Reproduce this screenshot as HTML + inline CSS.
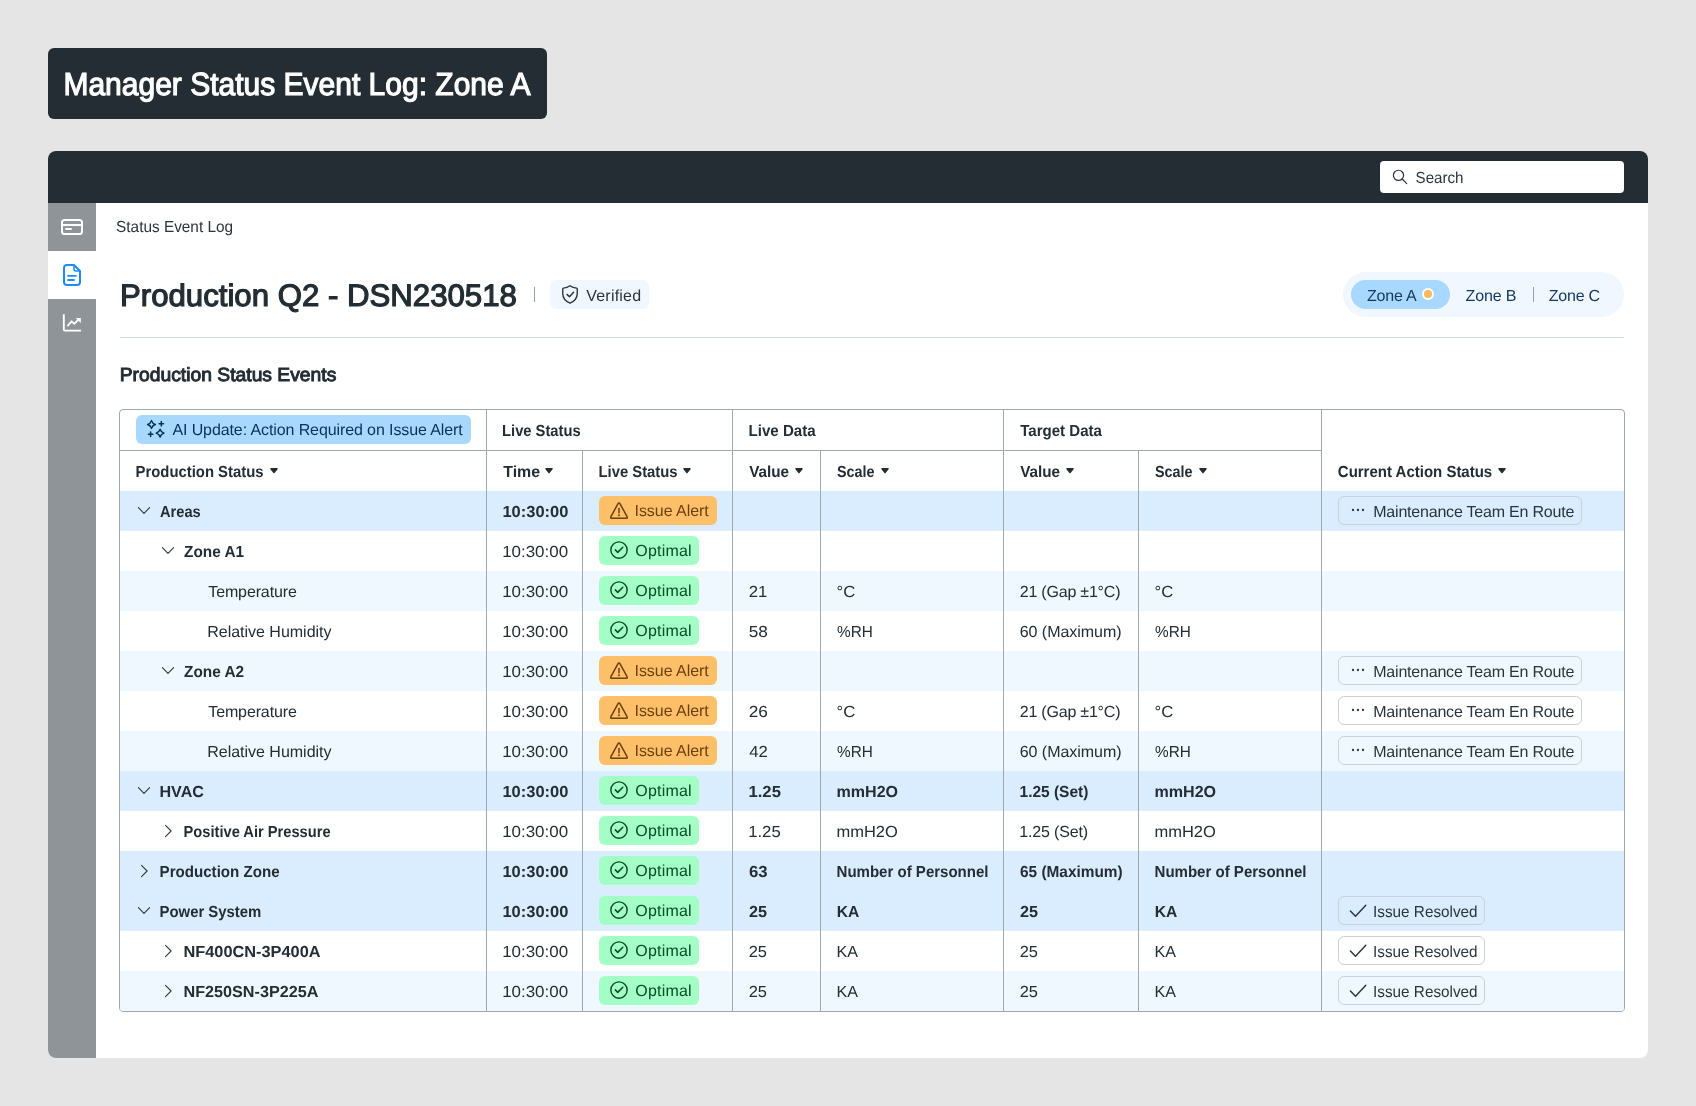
<!DOCTYPE html>
<html><head><meta charset="utf-8"><title>Manager Status Event Log: Zone A</title>
<style>
html,body{margin:0;padding:0}
body{width:1696px;height:1106px;background:#e5e5e5;position:relative;overflow:hidden;font-family:"Liberation Sans", sans-serif;color:#232d33}
.a{position:absolute}
.t{position:absolute;white-space:pre;line-height:1}
</style></head><body>
<div class="a" style="left:48px;top:48px;width:499px;height:71px;border-radius:6px;background:#232d33"></div>
<div class="a" style="left:48px;top:151px;width:1600px;height:907px;border-radius:8px;background:#fff;overflow:hidden">
<div class="a" style="left:0;top:0;width:1600px;height:52px;background:#232d33"></div>
<div class="a" style="left:0;top:52px;width:48px;height:855px;background:#8e9497"></div>
<div class="a" style="left:0;top:100px;width:48px;height:48px;background:#fff"></div>
</div>
<div class="a" style="left:1380px;top:161px;width:244px;height:32px;border-radius:4px;background:#fff"></div>
<svg style="position:absolute;left:1390px;top:167px;overflow:visible" width="20" height="20" viewBox="0 0 20 20" ><circle cx="8.5" cy="8.35" r="5.1" fill="none" stroke="#2a353b" stroke-width="1.2"/><path d="M12.2 12.05L16.7 16.6" stroke="#2a353b" stroke-width="1.25" stroke-linecap="round"/></svg>
<svg style="position:absolute;left:61px;top:219px;overflow:visible" width="22" height="16" viewBox="0 0 22 16" ><rect x="1" y="1" width="20" height="14" rx="2.6" fill="none" stroke="#fff" stroke-width="2"/><path d="M1 6H21" stroke="#fff" stroke-width="2.1"/><path d="M5 10H10" stroke="#fff" stroke-width="1.9" stroke-linecap="round"/></svg>
<svg style="position:absolute;left:63px;top:264px;overflow:visible" width="18" height="22" viewBox="0 0 18 22" ><path d="M11 1H4a3 3 0 0 0-3 3v14a3 3 0 0 0 3 3h10a3 3 0 0 0 3-3V7z" fill="none" stroke="#1a8cff" stroke-width="2" stroke-linejoin="round"/><path d="M11 1.5V5a2 2 0 0 0 2 2h3.5" fill="none" stroke="#1a8cff" stroke-width="1.6"/><path d="M5 11.8H13M5 16H11" stroke="#1a8cff" stroke-width="1.8" stroke-linecap="round"/></svg>
<svg style="position:absolute;left:63px;top:314px;overflow:visible" width="18" height="18" viewBox="0 0 18 18" ><path d="M0.8 0.2V15.6Q0.8 16.6 1.8 16.6H18" fill="none" stroke="#fff" stroke-width="1.9"/><path d="M4.4 12.2L8.6 7.3L11.3 9.8L15.8 5.2" fill="none" stroke="#fff" stroke-width="1.8" stroke-linejoin="round"/><path d="M12.6 3.9H17.8V9.1z" fill="#fff"/></svg>
<div class="a" style="left:534px;top:287px;width:1px;height:15px;background:#9aa1a6"></div>
<div class="a" style="left:550px;top:280px;width:99px;height:29px;border-radius:6px;background:#f0f7fe"></div>
<svg style="position:absolute;left:562px;top:285px;overflow:visible" width="16" height="19" viewBox="0 0 16 19" ><path d="M8 0.8C6 2.2 3.6 2.9 1.4 3.1Q0.75 3.15 0.75 3.8V8.6C0.75 13.2 3.6 16.4 8 18.2C12.4 16.4 15.25 13.2 15.25 8.6V3.8Q15.25 3.15 14.6 3.1C12.4 2.9 10 2.2 8 0.8Z" fill="none" stroke="#2a353b" stroke-width="1.4" stroke-linejoin="round"/><path d="M5 9.4L7.5 11.7L11.6 7.3" fill="none" stroke="#2a353b" stroke-width="1.45" stroke-linecap="round" stroke-linejoin="round"/></svg>
<div class="a" style="left:1343px;top:272px;width:281px;height:45px;border-radius:23px;background:#f0f7fe"></div>
<div class="a" style="left:1351px;top:280px;width:99px;height:29px;border-radius:15px;background:#a9d8ff"></div>
<div class="a" style="left:1422px;top:288px;width:12px;height:12px;border-radius:6px;background:#fff"></div>
<div class="a" style="left:1424px;top:290px;width:8px;height:8px;border-radius:4px;background:#fdb85a"></div>
<div class="a" style="left:1533px;top:287px;width:1px;height:15px;background:#9aa1a6"></div>
<div class="a" style="left:120px;top:337px;width:1504px;height:1px;background:#cfd6db"></div>
<div class="a" style="left:119px;top:409px;width:1504px;height:601px;border:1px solid #a1a8ad;border-radius:4px;background:#fff;overflow:hidden">
<div class="a" style="left:0;top:81px;width:1504px;height:40px;background:#d9edfe"></div>
<div class="a" style="left:0;top:121px;width:1504px;height:40px;background:#ffffff"></div>
<div class="a" style="left:0;top:161px;width:1504px;height:40px;background:#f0f8ff"></div>
<div class="a" style="left:0;top:201px;width:1504px;height:40px;background:#ffffff"></div>
<div class="a" style="left:0;top:241px;width:1504px;height:40px;background:#f0f8ff"></div>
<div class="a" style="left:0;top:281px;width:1504px;height:40px;background:#ffffff"></div>
<div class="a" style="left:0;top:321px;width:1504px;height:40px;background:#f0f8ff"></div>
<div class="a" style="left:0;top:361px;width:1504px;height:40px;background:#d9edfe"></div>
<div class="a" style="left:0;top:401px;width:1504px;height:40px;background:#ffffff"></div>
<div class="a" style="left:0;top:441px;width:1504px;height:40px;background:#d9edfe"></div>
<div class="a" style="left:0;top:481px;width:1504px;height:40px;background:#d9edfe"></div>
<div class="a" style="left:0;top:521px;width:1504px;height:40px;background:#ffffff"></div>
<div class="a" style="left:0;top:561px;width:1504px;height:40px;background:#f0f8ff"></div>
<div class="a" style="left:0;top:40px;width:1202px;height:1px;background:#a1a8ad"></div>
<div class="a" style="left:366px;top:0px;width:1px;height:601px;background:#a1a8ad"></div>
<div class="a" style="left:462px;top:41px;width:1px;height:560px;background:#a1a8ad"></div>
<div class="a" style="left:612px;top:0px;width:1px;height:601px;background:#a1a8ad"></div>
<div class="a" style="left:700px;top:41px;width:1px;height:560px;background:#a1a8ad"></div>
<div class="a" style="left:883px;top:0px;width:1px;height:601px;background:#a1a8ad"></div>
<div class="a" style="left:1018px;top:41px;width:1px;height:560px;background:#a1a8ad"></div>
<div class="a" style="left:1201px;top:0px;width:1px;height:601px;background:#a1a8ad"></div>
</div>
<div class="a" style="left:136px;top:415px;width:335px;height:29px;border-radius:6px;background:#a9d8ff"></div>
<svg style="position:absolute;left:140px;top:415px;overflow:visible" width="30" height="29" viewBox="0 0 30 29" ><path d="M11.5 5.6Q12.4009 8.5991 15.4 9.5Q12.4009 10.4009 11.5 13.4Q10.5991 10.4009 7.6 9.5Q10.5991 8.5991 11.5 5.6z" fill="none" stroke="#06315c" stroke-width="1.45" stroke-linejoin="round"/><path d="M19.1 8.7H23.5M21.3 6.499999999999999V10.899999999999999" stroke="#06315c" stroke-width="1.5" stroke-linecap="round" fill="none"/><path d="M8.399999999999999 19.3H12.8M10.6 17.1V21.5" stroke="#06315c" stroke-width="1.5" stroke-linecap="round" fill="none"/><path d="M20.1 14.200000000000001Q21.0009 17.1991 24.0 18.1Q21.0009 19.0009 20.1 22.0Q19.1991 19.0009 16.200000000000003 18.1Q19.1991 17.1991 20.1 14.200000000000001z" fill="none" stroke="#06315c" stroke-width="1.45" stroke-linejoin="round"/></svg>
<svg style="position:absolute;left:270px;top:468px;overflow:visible" width="8" height="5.4" viewBox="0 0 8 5.4" ><path d="M0.9 0h6.2a0.7 0.7 0 0 1 0.53 1.16L4.55 5a0.72 0.72 0 0 1-1.1 0L0.37 1.16A0.7 0.7 0 0 1 0.9 0z" fill="#232d33"/></svg>
<svg style="position:absolute;left:544.5px;top:468px;overflow:visible" width="8" height="5.4" viewBox="0 0 8 5.4" ><path d="M0.9 0h6.2a0.7 0.7 0 0 1 0.53 1.16L4.55 5a0.72 0.72 0 0 1-1.1 0L0.37 1.16A0.7 0.7 0 0 1 0.9 0z" fill="#232d33"/></svg>
<svg style="position:absolute;left:683px;top:468px;overflow:visible" width="8" height="5.4" viewBox="0 0 8 5.4" ><path d="M0.9 0h6.2a0.7 0.7 0 0 1 0.53 1.16L4.55 5a0.72 0.72 0 0 1-1.1 0L0.37 1.16A0.7 0.7 0 0 1 0.9 0z" fill="#232d33"/></svg>
<svg style="position:absolute;left:795px;top:468px;overflow:visible" width="8" height="5.4" viewBox="0 0 8 5.4" ><path d="M0.9 0h6.2a0.7 0.7 0 0 1 0.53 1.16L4.55 5a0.72 0.72 0 0 1-1.1 0L0.37 1.16A0.7 0.7 0 0 1 0.9 0z" fill="#232d33"/></svg>
<svg style="position:absolute;left:881px;top:468px;overflow:visible" width="8" height="5.4" viewBox="0 0 8 5.4" ><path d="M0.9 0h6.2a0.7 0.7 0 0 1 0.53 1.16L4.55 5a0.72 0.72 0 0 1-1.1 0L0.37 1.16A0.7 0.7 0 0 1 0.9 0z" fill="#232d33"/></svg>
<svg style="position:absolute;left:1066px;top:468px;overflow:visible" width="8" height="5.4" viewBox="0 0 8 5.4" ><path d="M0.9 0h6.2a0.7 0.7 0 0 1 0.53 1.16L4.55 5a0.72 0.72 0 0 1-1.1 0L0.37 1.16A0.7 0.7 0 0 1 0.9 0z" fill="#232d33"/></svg>
<svg style="position:absolute;left:1199px;top:468px;overflow:visible" width="8" height="5.4" viewBox="0 0 8 5.4" ><path d="M0.9 0h6.2a0.7 0.7 0 0 1 0.53 1.16L4.55 5a0.72 0.72 0 0 1-1.1 0L0.37 1.16A0.7 0.7 0 0 1 0.9 0z" fill="#232d33"/></svg>
<svg style="position:absolute;left:1498px;top:468px;overflow:visible" width="8" height="5.4" viewBox="0 0 8 5.4" ><path d="M0.9 0h6.2a0.7 0.7 0 0 1 0.53 1.16L4.55 5a0.72 0.72 0 0 1-1.1 0L0.37 1.16A0.7 0.7 0 0 1 0.9 0z" fill="#232d33"/></svg>
<svg style="position:absolute;left:136px;top:503px;overflow:visible" width="16" height="16" viewBox="0 0 16 16" ><path d="M2.4 4.7L8 10.4L13.6 4.7" fill="none" stroke="#333e45" stroke-width="1.15" stroke-linecap="round" stroke-linejoin="round"/></svg>
<div class="a" style="left:599px;top:496px;width:118px;height:29px;border-radius:6px;background:#fdbf68"></div>
<svg style="position:absolute;left:609px;top:501.1px;overflow:visible" width="20" height="20" viewBox="0 0 20 20" ><path d="M9.2 2.4a0.93 0.93 0 0 1 1.6 0L18.2 15.85a0.93 0.93 0 0 1-0.8 1.4H2.6a0.93 0.93 0 0 1-0.8-1.4L9.2 2.4z" fill="none" stroke="#6a4210" stroke-width="1.5" stroke-linejoin="round"/><path d="M10 7.6v4.1" stroke="#6a4210" stroke-width="1.5" stroke-linecap="round" fill="none"/><circle cx="10" cy="14.2" r="0.95" fill="#6a4210"/></svg>
<div class="a" style="left:1338px;top:496px;width:242px;height:27px;border-radius:6px;border:1px solid #ccd2d6"></div>
<svg style="position:absolute;left:1350px;top:502px;overflow:visible" width="16" height="16" viewBox="0 0 16 16" ><circle cx="3" cy="8" r="1.15" fill="#2a353b"/><circle cx="8" cy="8" r="1.15" fill="#2a353b"/><circle cx="13" cy="8" r="1.15" fill="#2a353b"/></svg>
<svg style="position:absolute;left:160px;top:543px;overflow:visible" width="16" height="16" viewBox="0 0 16 16" ><path d="M2.4 4.7L8 10.4L13.6 4.7" fill="none" stroke="#333e45" stroke-width="1.15" stroke-linecap="round" stroke-linejoin="round"/></svg>
<div class="a" style="left:599px;top:536px;width:100px;height:29px;border-radius:6px;background:#a3ffc5"></div>
<svg style="position:absolute;left:609px;top:540px;overflow:visible" width="20" height="20" viewBox="0 0 20 20" ><circle cx="10" cy="10" r="8.15" fill="none" stroke="#0b4d24" stroke-width="1.45"/><path d="M6.3 9.9L8.75 12.35L13.8 7.3" fill="none" stroke="#0b4d24" stroke-width="1.5" stroke-linecap="round" stroke-linejoin="round"/></svg>
<div class="a" style="left:599px;top:576px;width:100px;height:29px;border-radius:6px;background:#a3ffc5"></div>
<svg style="position:absolute;left:609px;top:580px;overflow:visible" width="20" height="20" viewBox="0 0 20 20" ><circle cx="10" cy="10" r="8.15" fill="none" stroke="#0b4d24" stroke-width="1.45"/><path d="M6.3 9.9L8.75 12.35L13.8 7.3" fill="none" stroke="#0b4d24" stroke-width="1.5" stroke-linecap="round" stroke-linejoin="round"/></svg>
<div class="a" style="left:599px;top:616px;width:100px;height:29px;border-radius:6px;background:#a3ffc5"></div>
<svg style="position:absolute;left:609px;top:620px;overflow:visible" width="20" height="20" viewBox="0 0 20 20" ><circle cx="10" cy="10" r="8.15" fill="none" stroke="#0b4d24" stroke-width="1.45"/><path d="M6.3 9.9L8.75 12.35L13.8 7.3" fill="none" stroke="#0b4d24" stroke-width="1.5" stroke-linecap="round" stroke-linejoin="round"/></svg>
<svg style="position:absolute;left:160px;top:663px;overflow:visible" width="16" height="16" viewBox="0 0 16 16" ><path d="M2.4 4.7L8 10.4L13.6 4.7" fill="none" stroke="#333e45" stroke-width="1.15" stroke-linecap="round" stroke-linejoin="round"/></svg>
<div class="a" style="left:599px;top:656px;width:118px;height:29px;border-radius:6px;background:#fdbf68"></div>
<svg style="position:absolute;left:609px;top:661.1px;overflow:visible" width="20" height="20" viewBox="0 0 20 20" ><path d="M9.2 2.4a0.93 0.93 0 0 1 1.6 0L18.2 15.85a0.93 0.93 0 0 1-0.8 1.4H2.6a0.93 0.93 0 0 1-0.8-1.4L9.2 2.4z" fill="none" stroke="#6a4210" stroke-width="1.5" stroke-linejoin="round"/><path d="M10 7.6v4.1" stroke="#6a4210" stroke-width="1.5" stroke-linecap="round" fill="none"/><circle cx="10" cy="14.2" r="0.95" fill="#6a4210"/></svg>
<div class="a" style="left:1338px;top:656px;width:242px;height:27px;border-radius:6px;border:1px solid #ccd2d6"></div>
<svg style="position:absolute;left:1350px;top:662px;overflow:visible" width="16" height="16" viewBox="0 0 16 16" ><circle cx="3" cy="8" r="1.15" fill="#2a353b"/><circle cx="8" cy="8" r="1.15" fill="#2a353b"/><circle cx="13" cy="8" r="1.15" fill="#2a353b"/></svg>
<div class="a" style="left:599px;top:696px;width:118px;height:29px;border-radius:6px;background:#fdbf68"></div>
<svg style="position:absolute;left:609px;top:701.1px;overflow:visible" width="20" height="20" viewBox="0 0 20 20" ><path d="M9.2 2.4a0.93 0.93 0 0 1 1.6 0L18.2 15.85a0.93 0.93 0 0 1-0.8 1.4H2.6a0.93 0.93 0 0 1-0.8-1.4L9.2 2.4z" fill="none" stroke="#6a4210" stroke-width="1.5" stroke-linejoin="round"/><path d="M10 7.6v4.1" stroke="#6a4210" stroke-width="1.5" stroke-linecap="round" fill="none"/><circle cx="10" cy="14.2" r="0.95" fill="#6a4210"/></svg>
<div class="a" style="left:1338px;top:696px;width:242px;height:27px;border-radius:6px;border:1px solid #ccd2d6"></div>
<svg style="position:absolute;left:1350px;top:702px;overflow:visible" width="16" height="16" viewBox="0 0 16 16" ><circle cx="3" cy="8" r="1.15" fill="#2a353b"/><circle cx="8" cy="8" r="1.15" fill="#2a353b"/><circle cx="13" cy="8" r="1.15" fill="#2a353b"/></svg>
<div class="a" style="left:599px;top:736px;width:118px;height:29px;border-radius:6px;background:#fdbf68"></div>
<svg style="position:absolute;left:609px;top:741.1px;overflow:visible" width="20" height="20" viewBox="0 0 20 20" ><path d="M9.2 2.4a0.93 0.93 0 0 1 1.6 0L18.2 15.85a0.93 0.93 0 0 1-0.8 1.4H2.6a0.93 0.93 0 0 1-0.8-1.4L9.2 2.4z" fill="none" stroke="#6a4210" stroke-width="1.5" stroke-linejoin="round"/><path d="M10 7.6v4.1" stroke="#6a4210" stroke-width="1.5" stroke-linecap="round" fill="none"/><circle cx="10" cy="14.2" r="0.95" fill="#6a4210"/></svg>
<div class="a" style="left:1338px;top:736px;width:242px;height:27px;border-radius:6px;border:1px solid #ccd2d6"></div>
<svg style="position:absolute;left:1350px;top:742px;overflow:visible" width="16" height="16" viewBox="0 0 16 16" ><circle cx="3" cy="8" r="1.15" fill="#2a353b"/><circle cx="8" cy="8" r="1.15" fill="#2a353b"/><circle cx="13" cy="8" r="1.15" fill="#2a353b"/></svg>
<svg style="position:absolute;left:136px;top:783px;overflow:visible" width="16" height="16" viewBox="0 0 16 16" ><path d="M2.4 4.7L8 10.4L13.6 4.7" fill="none" stroke="#333e45" stroke-width="1.15" stroke-linecap="round" stroke-linejoin="round"/></svg>
<div class="a" style="left:599px;top:776px;width:100px;height:29px;border-radius:6px;background:#a3ffc5"></div>
<svg style="position:absolute;left:609px;top:780px;overflow:visible" width="20" height="20" viewBox="0 0 20 20" ><circle cx="10" cy="10" r="8.15" fill="none" stroke="#0b4d24" stroke-width="1.45"/><path d="M6.3 9.9L8.75 12.35L13.8 7.3" fill="none" stroke="#0b4d24" stroke-width="1.5" stroke-linecap="round" stroke-linejoin="round"/></svg>
<svg style="position:absolute;left:160px;top:823px;overflow:visible" width="16" height="16" viewBox="0 0 16 16" ><path d="M5.5 2.4L11.1 8L5.5 13.6" fill="none" stroke="#333e45" stroke-width="1.15" stroke-linecap="round" stroke-linejoin="round"/></svg>
<div class="a" style="left:599px;top:816px;width:100px;height:29px;border-radius:6px;background:#a3ffc5"></div>
<svg style="position:absolute;left:609px;top:820px;overflow:visible" width="20" height="20" viewBox="0 0 20 20" ><circle cx="10" cy="10" r="8.15" fill="none" stroke="#0b4d24" stroke-width="1.45"/><path d="M6.3 9.9L8.75 12.35L13.8 7.3" fill="none" stroke="#0b4d24" stroke-width="1.5" stroke-linecap="round" stroke-linejoin="round"/></svg>
<svg style="position:absolute;left:136px;top:863px;overflow:visible" width="16" height="16" viewBox="0 0 16 16" ><path d="M5.5 2.4L11.1 8L5.5 13.6" fill="none" stroke="#333e45" stroke-width="1.15" stroke-linecap="round" stroke-linejoin="round"/></svg>
<div class="a" style="left:599px;top:856px;width:100px;height:29px;border-radius:6px;background:#a3ffc5"></div>
<svg style="position:absolute;left:609px;top:860px;overflow:visible" width="20" height="20" viewBox="0 0 20 20" ><circle cx="10" cy="10" r="8.15" fill="none" stroke="#0b4d24" stroke-width="1.45"/><path d="M6.3 9.9L8.75 12.35L13.8 7.3" fill="none" stroke="#0b4d24" stroke-width="1.5" stroke-linecap="round" stroke-linejoin="round"/></svg>
<svg style="position:absolute;left:136px;top:903px;overflow:visible" width="16" height="16" viewBox="0 0 16 16" ><path d="M2.4 4.7L8 10.4L13.6 4.7" fill="none" stroke="#333e45" stroke-width="1.15" stroke-linecap="round" stroke-linejoin="round"/></svg>
<div class="a" style="left:599px;top:896px;width:100px;height:29px;border-radius:6px;background:#a3ffc5"></div>
<svg style="position:absolute;left:609px;top:900px;overflow:visible" width="20" height="20" viewBox="0 0 20 20" ><circle cx="10" cy="10" r="8.15" fill="none" stroke="#0b4d24" stroke-width="1.45"/><path d="M6.3 9.9L8.75 12.35L13.8 7.3" fill="none" stroke="#0b4d24" stroke-width="1.5" stroke-linecap="round" stroke-linejoin="round"/></svg>
<div class="a" style="left:1338px;top:896px;width:145px;height:27px;border-radius:6px;border:1px solid #ccd2d6"></div>
<svg style="position:absolute;left:1348px;top:901px;overflow:visible" width="20" height="20" viewBox="0 0 20 20" ><path d="M2.4 10.1L7.5 15.3L17.8 4.3" fill="none" stroke="#2a353b" stroke-width="1.45" stroke-linecap="round" stroke-linejoin="round"/></svg>
<svg style="position:absolute;left:160px;top:943px;overflow:visible" width="16" height="16" viewBox="0 0 16 16" ><path d="M5.5 2.4L11.1 8L5.5 13.6" fill="none" stroke="#333e45" stroke-width="1.15" stroke-linecap="round" stroke-linejoin="round"/></svg>
<div class="a" style="left:599px;top:936px;width:100px;height:29px;border-radius:6px;background:#a3ffc5"></div>
<svg style="position:absolute;left:609px;top:940px;overflow:visible" width="20" height="20" viewBox="0 0 20 20" ><circle cx="10" cy="10" r="8.15" fill="none" stroke="#0b4d24" stroke-width="1.45"/><path d="M6.3 9.9L8.75 12.35L13.8 7.3" fill="none" stroke="#0b4d24" stroke-width="1.5" stroke-linecap="round" stroke-linejoin="round"/></svg>
<div class="a" style="left:1338px;top:936px;width:145px;height:27px;border-radius:6px;border:1px solid #ccd2d6"></div>
<svg style="position:absolute;left:1348px;top:941px;overflow:visible" width="20" height="20" viewBox="0 0 20 20" ><path d="M2.4 10.1L7.5 15.3L17.8 4.3" fill="none" stroke="#2a353b" stroke-width="1.45" stroke-linecap="round" stroke-linejoin="round"/></svg>
<svg style="position:absolute;left:160px;top:983px;overflow:visible" width="16" height="16" viewBox="0 0 16 16" ><path d="M5.5 2.4L11.1 8L5.5 13.6" fill="none" stroke="#333e45" stroke-width="1.15" stroke-linecap="round" stroke-linejoin="round"/></svg>
<div class="a" style="left:599px;top:976px;width:100px;height:29px;border-radius:6px;background:#a3ffc5"></div>
<svg style="position:absolute;left:609px;top:980px;overflow:visible" width="20" height="20" viewBox="0 0 20 20" ><circle cx="10" cy="10" r="8.15" fill="none" stroke="#0b4d24" stroke-width="1.45"/><path d="M6.3 9.9L8.75 12.35L13.8 7.3" fill="none" stroke="#0b4d24" stroke-width="1.5" stroke-linecap="round" stroke-linejoin="round"/></svg>
<div class="a" style="left:1338px;top:976px;width:145px;height:27px;border-radius:6px;border:1px solid #ccd2d6"></div>
<svg style="position:absolute;left:1348px;top:981px;overflow:visible" width="20" height="20" viewBox="0 0 20 20" ><path d="M2.4 10.1L7.5 15.3L17.8 4.3" fill="none" stroke="#2a353b" stroke-width="1.45" stroke-linecap="round" stroke-linejoin="round"/></svg>
<div class="a" style="left:0;top:0;width:1696px;height:1106px;will-change:transform;text-rendering:geometricPrecision">
<span class="t" style="left:63.00px;top:64.00px;font-size:32px;line-height:40px;font-weight:400;color:#fff;-webkit-text-stroke:1.2px #fff;transform:translateX(0.43px) scaleX(0.9375);transform-origin:0 0">Manager Status Event Log: Zone A</span>
<span class="t" style="left:1415.00px;top:169.00px;font-size:16px;line-height:20px;font-weight:400;color:#2a353b;transform:translateX(0.59px) scaleX(0.9449);transform-origin:0 0">Search</span>
<span class="t" style="left:116.00px;top:218.00px;font-size:16px;line-height:20px;font-weight:400;color:#2a353b;transform:translateX(0.08px) scaleX(0.9600);transform-origin:0 0">Status Event Log</span>
<span class="t" style="left:119.00px;top:276.00px;font-size:31px;line-height:39px;font-weight:400;color:#232d33;-webkit-text-stroke:1.2px #232d33;transform:translateX(0.99px) scaleX(1.0057);transform-origin:0 0">Production Q2 - DSN230518</span>
<span class="t" style="left:586.25px;top:287.00px;font-size:16px;line-height:20px;font-weight:400;color:#2a353b;letter-spacing:0.214px">Verified</span>
<span class="t" style="left:1366.90px;top:287.00px;font-size:16px;line-height:20px;font-weight:400;color:#123a63;letter-spacing:-0.170px">Zone A</span>
<span class="t" style="left:1465.60px;top:287.00px;font-size:16px;line-height:20px;font-weight:400;color:#123a63;letter-spacing:-0.170px">Zone B</span>
<span class="t" style="left:1548.80px;top:287.00px;font-size:16px;line-height:20px;font-weight:400;color:#123a63;letter-spacing:-0.230px">Zone C</span>
<span class="t" style="left:119.00px;top:364.00px;font-size:19px;line-height:24px;font-weight:400;color:#232d33;-webkit-text-stroke:0.95px #232d33;transform:translateX(0.73px) scaleX(1.0153);transform-origin:0 0">Production Status Events</span>
<span class="t" style="left:172.40px;top:421.00px;font-size:16px;line-height:20px;font-weight:400;color:#06315c;letter-spacing:-0.101px">AI Update: Action Required on Issue Alert</span>
<span class="t" style="left:502.00px;top:422.00px;font-size:16px;line-height:20px;font-weight:700;color:#232d33;transform:translateX(0.08px) scaleX(0.9194);transform-origin:0 0">Live Status</span>
<span class="t" style="left:748.00px;top:422.00px;font-size:16px;line-height:20px;font-weight:700;color:#232d33;transform:translateX(0.56px) scaleX(0.9423);transform-origin:0 0">Live Data</span>
<span class="t" style="left:1020.00px;top:422.00px;font-size:16px;line-height:20px;font-weight:700;color:#232d33;transform:translateX(0.27px) scaleX(0.9395);transform-origin:0 0">Target Data</span>
<span class="t" style="left:135.00px;top:463.00px;font-size:16px;line-height:20px;font-weight:700;color:#232d33;transform:translateX(0.57px) scaleX(0.9287);transform-origin:0 0">Production Status</span>
<span class="t" style="left:503.00px;top:463.00px;font-size:16px;line-height:20px;font-weight:700;color:#232d33;transform:translateX(0.25px) scaleX(0.9931);transform-origin:0 0">Time</span>
<span class="t" style="left:598.00px;top:463.00px;font-size:16px;line-height:20px;font-weight:700;color:#232d33;transform:translateX(0.57px) scaleX(0.9254);transform-origin:0 0">Live Status</span>
<span class="t" style="left:749.00px;top:463.00px;font-size:16px;line-height:20px;font-weight:700;color:#232d33;transform:translateX(0.26px) scaleX(0.9512);transform-origin:0 0">Value</span>
<span class="t" style="left:837.00px;top:463.00px;font-size:16px;line-height:20px;font-weight:700;color:#232d33;transform:translateX(0.05px) scaleX(0.8957);transform-origin:0 0">Scale</span>
<span class="t" style="left:1020.00px;top:463.00px;font-size:16px;line-height:20px;font-weight:700;color:#232d33;transform:translateX(0.26px) scaleX(0.9512);transform-origin:0 0">Value</span>
<span class="t" style="left:1155.00px;top:463.00px;font-size:16px;line-height:20px;font-weight:700;color:#232d33;transform:translateX(0.05px) scaleX(0.8957);transform-origin:0 0">Scale</span>
<span class="t" style="left:1337.00px;top:463.00px;font-size:16px;line-height:20px;font-weight:700;color:#232d33;transform:translateX(0.80px) scaleX(0.9372);transform-origin:0 0">Current Action Status</span>
<span class="t" style="left:160.00px;top:503.00px;font-size:16px;line-height:20px;font-weight:700;color:#232d33;transform:translateX(0.04px) scaleX(0.9133);transform-origin:0 0">Areas</span>
<span class="t" style="left:502.00px;top:503.00px;font-size:16px;line-height:20px;font-weight:700;color:#232d33;transform:translateX(0.47px) scaleX(1.0281);transform-origin:0 0">10:30:00</span>
<span class="t" style="left:634.50px;top:502.00px;font-size:16px;line-height:20px;font-weight:400;color:#6a4210;letter-spacing:-0.050px">Issue Alert</span>
<span class="t" style="left:1373.25px;top:503.00px;font-size:16px;line-height:20px;font-weight:400;color:#2a353b;letter-spacing:-0.208px">Maintenance Team En Route</span>
<span class="t" style="left:184.00px;top:543.00px;font-size:16px;line-height:20px;font-weight:700;color:#232d33;transform:translateX(0.02px) scaleX(0.9593);transform-origin:0 0">Zone A1</span>
<span class="t" style="left:502.00px;top:543.00px;font-size:16px;line-height:20px;font-weight:400;color:#232d33;transform:translateX(0.18px) scaleX(1.0579);transform-origin:0 0">10:30:00</span>
<span class="t" style="left:635.25px;top:542.00px;font-size:16px;line-height:20px;font-weight:400;color:#0b4d24;letter-spacing:0.208px">Optimal</span>
<span class="t" style="left:208.25px;top:583.00px;font-size:16px;line-height:20px;font-weight:400;color:#232d33;letter-spacing:-0.125px">Temperature</span>
<span class="t" style="left:502.00px;top:583.00px;font-size:16px;line-height:20px;font-weight:400;color:#232d33;transform:translateX(0.18px) scaleX(1.0579);transform-origin:0 0">10:30:00</span>
<span class="t" style="left:635.25px;top:582.00px;font-size:16px;line-height:20px;font-weight:400;color:#0b4d24;letter-spacing:0.208px">Optimal</span>
<span class="t" style="left:748.00px;top:583.00px;font-size:16px;line-height:20px;font-weight:400;color:#232d33;transform:translateX(0.72px) scaleX(1.0462);transform-origin:0 0">21</span>
<span class="t" style="left:836.00px;top:583.00px;font-size:16px;line-height:20px;font-weight:400;color:#232d33;transform:translateX(0.45px) scaleX(1.0462);transform-origin:0 0">°C</span>
<span class="t" style="left:1019.75px;top:583.00px;font-size:16px;line-height:20px;font-weight:400;color:#232d33;letter-spacing:-0.208px">21 (Gap ±1°C)</span>
<span class="t" style="left:1154.00px;top:583.00px;font-size:16px;line-height:20px;font-weight:400;color:#232d33;transform:translateX(0.45px) scaleX(1.0462);transform-origin:0 0">°C</span>
<span class="t" style="left:207.25px;top:623.00px;font-size:16px;line-height:20px;font-weight:400;color:#232d33;letter-spacing:-0.016px">Relative Humidity</span>
<span class="t" style="left:502.00px;top:623.00px;font-size:16px;line-height:20px;font-weight:400;color:#232d33;transform:translateX(0.18px) scaleX(1.0579);transform-origin:0 0">10:30:00</span>
<span class="t" style="left:635.25px;top:622.00px;font-size:16px;line-height:20px;font-weight:400;color:#0b4d24;letter-spacing:0.208px">Optimal</span>
<span class="t" style="left:748.00px;top:623.00px;font-size:16px;line-height:20px;font-weight:400;color:#232d33;transform:translateX(0.69px) scaleX(1.0769);transform-origin:0 0">58</span>
<span class="t" style="left:837.00px;top:623.00px;font-size:16px;line-height:20px;font-weight:400;color:#232d33;transform:translateX(0.02px) scaleX(0.9577);transform-origin:0 0">%RH</span>
<span class="t" style="left:1019.75px;top:623.00px;font-size:16px;line-height:20px;font-weight:400;color:#232d33;letter-spacing:-0.045px">60 (Maximum)</span>
<span class="t" style="left:1155.00px;top:623.00px;font-size:16px;line-height:20px;font-weight:400;color:#232d33;transform:translateX(0.02px) scaleX(0.9577);transform-origin:0 0">%RH</span>
<span class="t" style="left:184.00px;top:663.00px;font-size:16px;line-height:20px;font-weight:700;color:#232d33;transform:translateX(0.02px) scaleX(0.9593);transform-origin:0 0">Zone A2</span>
<span class="t" style="left:502.00px;top:663.00px;font-size:16px;line-height:20px;font-weight:400;color:#232d33;transform:translateX(0.18px) scaleX(1.0579);transform-origin:0 0">10:30:00</span>
<span class="t" style="left:634.50px;top:662.00px;font-size:16px;line-height:20px;font-weight:400;color:#6a4210;letter-spacing:-0.050px">Issue Alert</span>
<span class="t" style="left:1373.25px;top:663.00px;font-size:16px;line-height:20px;font-weight:400;color:#2a353b;letter-spacing:-0.208px">Maintenance Team En Route</span>
<span class="t" style="left:208.25px;top:703.00px;font-size:16px;line-height:20px;font-weight:400;color:#232d33;letter-spacing:-0.125px">Temperature</span>
<span class="t" style="left:502.00px;top:703.00px;font-size:16px;line-height:20px;font-weight:400;color:#232d33;transform:translateX(0.18px) scaleX(1.0579);transform-origin:0 0">10:30:00</span>
<span class="t" style="left:634.50px;top:702.00px;font-size:16px;line-height:20px;font-weight:400;color:#6a4210;letter-spacing:-0.050px">Issue Alert</span>
<span class="t" style="left:748.00px;top:703.00px;font-size:16px;line-height:20px;font-weight:400;color:#232d33;transform:translateX(0.69px) scaleX(1.0769);transform-origin:0 0">26</span>
<span class="t" style="left:836.00px;top:703.00px;font-size:16px;line-height:20px;font-weight:400;color:#232d33;transform:translateX(0.45px) scaleX(1.0462);transform-origin:0 0">°C</span>
<span class="t" style="left:1019.75px;top:703.00px;font-size:16px;line-height:20px;font-weight:400;color:#232d33;letter-spacing:-0.208px">21 (Gap ±1°C)</span>
<span class="t" style="left:1154.00px;top:703.00px;font-size:16px;line-height:20px;font-weight:400;color:#232d33;transform:translateX(0.45px) scaleX(1.0462);transform-origin:0 0">°C</span>
<span class="t" style="left:1373.25px;top:703.00px;font-size:16px;line-height:20px;font-weight:400;color:#2a353b;letter-spacing:-0.208px">Maintenance Team En Route</span>
<span class="t" style="left:207.25px;top:743.00px;font-size:16px;line-height:20px;font-weight:400;color:#232d33;letter-spacing:-0.016px">Relative Humidity</span>
<span class="t" style="left:502.00px;top:743.00px;font-size:16px;line-height:20px;font-weight:400;color:#232d33;transform:translateX(0.18px) scaleX(1.0579);transform-origin:0 0">10:30:00</span>
<span class="t" style="left:634.50px;top:742.00px;font-size:16px;line-height:20px;font-weight:400;color:#6a4210;letter-spacing:-0.050px">Issue Alert</span>
<span class="t" style="left:749.00px;top:743.00px;font-size:16px;line-height:20px;font-weight:400;color:#232d33;transform:translateX(0.24px) scaleX(1.0448);transform-origin:0 0">42</span>
<span class="t" style="left:837.00px;top:743.00px;font-size:16px;line-height:20px;font-weight:400;color:#232d33;transform:translateX(0.02px) scaleX(0.9577);transform-origin:0 0">%RH</span>
<span class="t" style="left:1019.75px;top:743.00px;font-size:16px;line-height:20px;font-weight:400;color:#232d33;letter-spacing:-0.045px">60 (Maximum)</span>
<span class="t" style="left:1155.00px;top:743.00px;font-size:16px;line-height:20px;font-weight:400;color:#232d33;transform:translateX(0.02px) scaleX(0.9577);transform-origin:0 0">%RH</span>
<span class="t" style="left:1373.25px;top:743.00px;font-size:16px;line-height:20px;font-weight:400;color:#2a353b;letter-spacing:-0.208px">Maintenance Team En Route</span>
<span class="t" style="left:159.00px;top:783.00px;font-size:16px;line-height:20px;font-weight:700;color:#232d33;transform:translateX(0.49px) scaleX(1.0058);transform-origin:0 0">HVAC</span>
<span class="t" style="left:502.00px;top:783.00px;font-size:16px;line-height:20px;font-weight:700;color:#232d33;transform:translateX(0.47px) scaleX(1.0281);transform-origin:0 0">10:30:00</span>
<span class="t" style="left:635.25px;top:782.00px;font-size:16px;line-height:20px;font-weight:400;color:#0b4d24;letter-spacing:0.208px">Optimal</span>
<span class="t" style="left:748.00px;top:783.00px;font-size:16px;line-height:20px;font-weight:700;color:#232d33;transform:translateX(0.46px) scaleX(1.0420);transform-origin:0 0">1.25</span>
<span class="t" style="left:836.00px;top:783.00px;font-size:16px;line-height:20px;font-weight:700;color:#232d33;transform:translateX(0.50px) scaleX(1.0042);transform-origin:0 0">mmH2O</span>
<span class="t" style="left:1019.00px;top:783.00px;font-size:16px;line-height:20px;font-weight:700;color:#232d33;transform:translateX(0.53px) scaleX(0.9675);transform-origin:0 0">1.25 (Set)</span>
<span class="t" style="left:1154.00px;top:783.00px;font-size:16px;line-height:20px;font-weight:700;color:#232d33;transform:translateX(0.50px) scaleX(1.0042);transform-origin:0 0">mmH2O</span>
<span class="t" style="left:183.00px;top:823.00px;font-size:16px;line-height:20px;font-weight:700;color:#232d33;transform:translateX(0.58px) scaleX(0.9165);transform-origin:0 0">Positive Air Pressure</span>
<span class="t" style="left:502.00px;top:823.00px;font-size:16px;line-height:20px;font-weight:400;color:#232d33;transform:translateX(0.18px) scaleX(1.0579);transform-origin:0 0">10:30:00</span>
<span class="t" style="left:635.25px;top:822.00px;font-size:16px;line-height:20px;font-weight:400;color:#0b4d24;letter-spacing:0.208px">Optimal</span>
<span class="t" style="left:748.00px;top:823.00px;font-size:16px;line-height:20px;font-weight:400;color:#232d33;transform:translateX(0.20px) scaleX(1.0427);transform-origin:0 0">1.25</span>
<span class="t" style="left:836.00px;top:823.00px;font-size:16px;line-height:20px;font-weight:400;color:#232d33;transform:translateX(0.47px) scaleX(1.0303);transform-origin:0 0">mmH2O</span>
<span class="t" style="left:1019.25px;top:823.00px;font-size:16px;line-height:20px;font-weight:400;color:#232d33;letter-spacing:-0.167px">1.25 (Set)</span>
<span class="t" style="left:1154.00px;top:823.00px;font-size:16px;line-height:20px;font-weight:400;color:#232d33;transform:translateX(0.47px) scaleX(1.0303);transform-origin:0 0">mmH2O</span>
<span class="t" style="left:159.00px;top:863.00px;font-size:16px;line-height:20px;font-weight:700;color:#232d33;transform:translateX(0.56px) scaleX(0.9442);transform-origin:0 0">Production Zone</span>
<span class="t" style="left:502.00px;top:863.00px;font-size:16px;line-height:20px;font-weight:700;color:#232d33;transform:translateX(0.47px) scaleX(1.0281);transform-origin:0 0">10:30:00</span>
<span class="t" style="left:635.25px;top:862.00px;font-size:16px;line-height:20px;font-weight:400;color:#0b4d24;letter-spacing:0.208px">Optimal</span>
<span class="t" style="left:748.00px;top:863.00px;font-size:16px;line-height:20px;font-weight:700;color:#232d33;transform:translateX(0.98px) scaleX(1.0448);transform-origin:0 0">63</span>
<span class="t" style="left:836.00px;top:863.00px;font-size:16px;line-height:20px;font-weight:700;color:#232d33;transform:translateX(0.56px) scaleX(0.9390);transform-origin:0 0">Number of Personnel</span>
<span class="t" style="left:1020.00px;top:863.00px;font-size:16px;line-height:20px;font-weight:700;color:#232d33;transform:translateX(0.02px) scaleX(0.9621);transform-origin:0 0">65 (Maximum)</span>
<span class="t" style="left:1154.00px;top:863.00px;font-size:16px;line-height:20px;font-weight:700;color:#232d33;transform:translateX(0.56px) scaleX(0.9390);transform-origin:0 0">Number of Personnel</span>
<span class="t" style="left:159.00px;top:903.00px;font-size:16px;line-height:20px;font-weight:700;color:#232d33;transform:translateX(0.57px) scaleX(0.9302);transform-origin:0 0">Power System</span>
<span class="t" style="left:502.00px;top:903.00px;font-size:16px;line-height:20px;font-weight:700;color:#232d33;transform:translateX(0.47px) scaleX(1.0281);transform-origin:0 0">10:30:00</span>
<span class="t" style="left:635.25px;top:902.00px;font-size:16px;line-height:20px;font-weight:400;color:#0b4d24;letter-spacing:0.208px">Optimal</span>
<span class="t" style="left:748.00px;top:903.00px;font-size:16px;line-height:20px;font-weight:700;color:#232d33;transform:translateX(0.99px) scaleX(1.0149);transform-origin:0 0">25</span>
<span class="t" style="left:836.00px;top:903.00px;font-size:16px;line-height:20px;font-weight:700;color:#232d33;transform:translateX(0.83px) scaleX(0.9747);transform-origin:0 0">KA</span>
<span class="t" style="left:1019.00px;top:903.00px;font-size:16px;line-height:20px;font-weight:700;color:#232d33;transform:translateX(0.99px) scaleX(1.0149);transform-origin:0 0">25</span>
<span class="t" style="left:1154.00px;top:903.00px;font-size:16px;line-height:20px;font-weight:700;color:#232d33;transform:translateX(0.83px) scaleX(0.9747);transform-origin:0 0">KA</span>
<span class="t" style="left:1373.00px;top:903.00px;font-size:16px;line-height:20px;font-weight:400;color:#2a353b;transform:translateX(0.07px) scaleX(0.9555);transform-origin:0 0">Issue Resolved</span>
<span class="t" style="left:183.00px;top:943.00px;font-size:16px;line-height:20px;font-weight:700;color:#232d33;transform:translateX(0.48px) scaleX(1.0207);transform-origin:0 0">NF400CN-3P400A</span>
<span class="t" style="left:502.00px;top:943.00px;font-size:16px;line-height:20px;font-weight:400;color:#232d33;transform:translateX(0.18px) scaleX(1.0579);transform-origin:0 0">10:30:00</span>
<span class="t" style="left:635.25px;top:942.00px;font-size:16px;line-height:20px;font-weight:400;color:#0b4d24;letter-spacing:0.208px">Optimal</span>
<span class="t" style="left:748.00px;top:943.00px;font-size:16px;line-height:20px;font-weight:400;color:#232d33;transform:translateX(0.73px) scaleX(1.0277);transform-origin:0 0">25</span>
<span class="t" style="left:836.00px;top:943.00px;font-size:16px;line-height:20px;font-weight:400;color:#232d33;transform:translateX(0.54px) scaleX(1.0050);transform-origin:0 0">KA</span>
<span class="t" style="left:1019.00px;top:943.00px;font-size:16px;line-height:20px;font-weight:400;color:#232d33;transform:translateX(0.73px) scaleX(1.0277);transform-origin:0 0">25</span>
<span class="t" style="left:1154.00px;top:943.00px;font-size:16px;line-height:20px;font-weight:400;color:#232d33;transform:translateX(0.54px) scaleX(1.0050);transform-origin:0 0">KA</span>
<span class="t" style="left:1373.00px;top:943.00px;font-size:16px;line-height:20px;font-weight:400;color:#2a353b;transform:translateX(0.07px) scaleX(0.9555);transform-origin:0 0">Issue Resolved</span>
<span class="t" style="left:183.00px;top:983.00px;font-size:16px;line-height:20px;font-weight:700;color:#232d33;transform:translateX(0.49px) scaleX(1.0114);transform-origin:0 0">NF250SN-3P225A</span>
<span class="t" style="left:502.00px;top:983.00px;font-size:16px;line-height:20px;font-weight:400;color:#232d33;transform:translateX(0.18px) scaleX(1.0579);transform-origin:0 0">10:30:00</span>
<span class="t" style="left:635.25px;top:982.00px;font-size:16px;line-height:20px;font-weight:400;color:#0b4d24;letter-spacing:0.208px">Optimal</span>
<span class="t" style="left:748.00px;top:983.00px;font-size:16px;line-height:20px;font-weight:400;color:#232d33;transform:translateX(0.73px) scaleX(1.0277);transform-origin:0 0">25</span>
<span class="t" style="left:836.00px;top:983.00px;font-size:16px;line-height:20px;font-weight:400;color:#232d33;transform:translateX(0.54px) scaleX(1.0050);transform-origin:0 0">KA</span>
<span class="t" style="left:1019.00px;top:983.00px;font-size:16px;line-height:20px;font-weight:400;color:#232d33;transform:translateX(0.73px) scaleX(1.0277);transform-origin:0 0">25</span>
<span class="t" style="left:1154.00px;top:983.00px;font-size:16px;line-height:20px;font-weight:400;color:#232d33;transform:translateX(0.54px) scaleX(1.0050);transform-origin:0 0">KA</span>
<span class="t" style="left:1373.00px;top:983.00px;font-size:16px;line-height:20px;font-weight:400;color:#2a353b;transform:translateX(0.07px) scaleX(0.9555);transform-origin:0 0">Issue Resolved</span>
</div>
</body></html>
